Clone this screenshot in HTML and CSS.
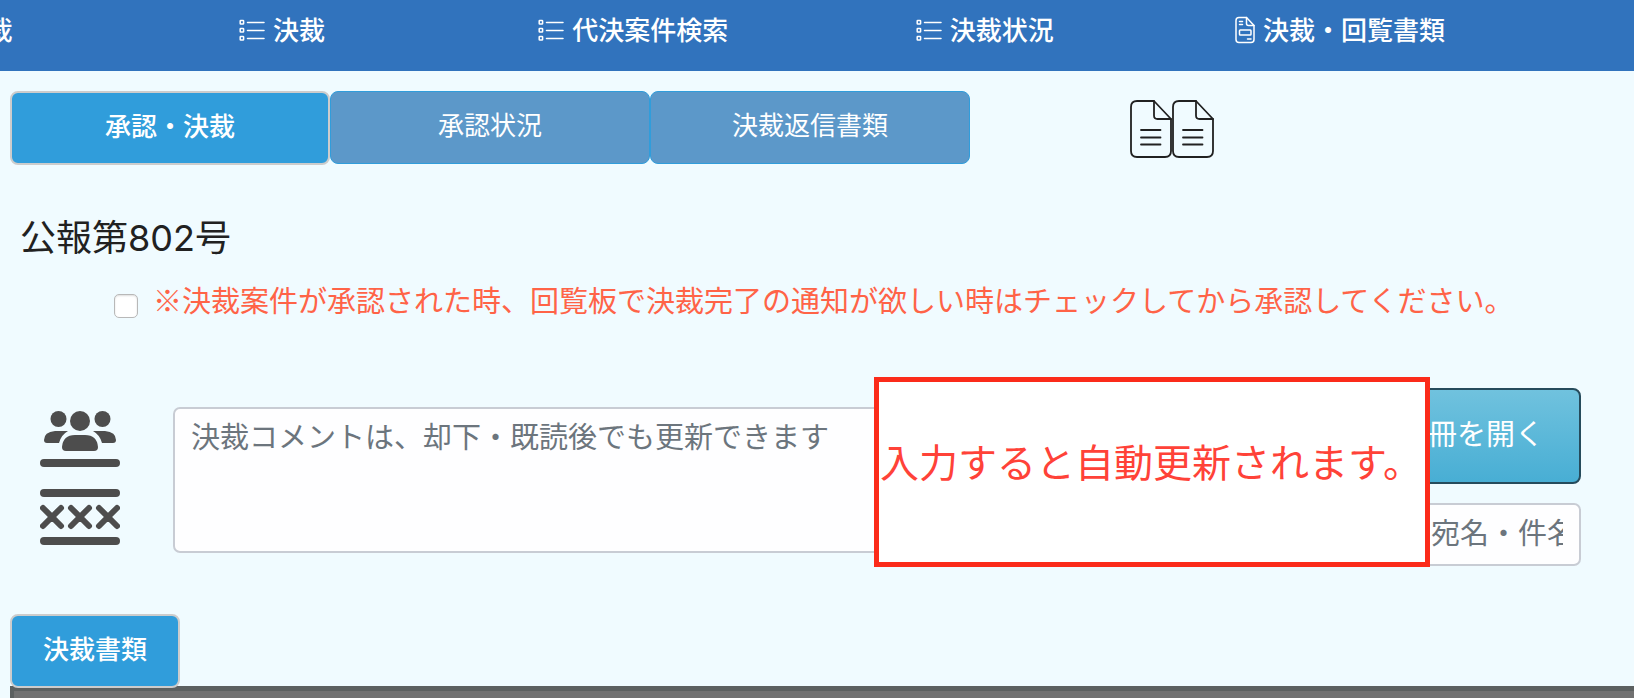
FILE: index.html
```html
<!DOCTYPE html>
<html lang="ja">
<head>
	<meta charset="utf-8">
	<meta name="viewport" content="width=device-width, initial-scale=1">
	<title>承認・決裁</title>
	<link rel="stylesheet" href="styles.css">
</head>
<body>
	<svg class="defs">
		<symbol id="icon-list" viewBox="0 0 26 24">
			<g fill="none" stroke="currentColor" stroke-width="1.5">
				<rect x="1.2" y="2.5" width="3.4" height="3.6" rx="0.6"/>
				<rect x="1.2" y="10.5" width="3.4" height="3.6" rx="0.6"/>
				<rect x="1.2" y="18.5" width="3.4" height="3.6" rx="0.6"/>
				<path d="M8.5 4.5H25M8.5 12.5H25M8.5 20.5H25" stroke-linecap="round"/>
			</g>
		</symbol>
		<symbol id="icon-doc" viewBox="0 0 42 58">
			<g fill="none" stroke="currentColor" stroke-width="1.8" stroke-linecap="round" stroke-linejoin="round">
				<path d="M24 1H7Q1 1 1 7V51Q1 57 7 57H35Q41 57 41 51V19Z"/>
				<path d="M24 1V15.5Q24 19 27.5 19H41"/>
				<path d="M11 30H30.5M11 37.5H30.5M11 44.5H30.5"/>
			</g>
		</symbol>
	</svg>

	<nav class="navbar">
		<a class="nav-item" href="#"><svg class="nav-icon"><use href="#icon-list"/></svg>承認・決裁</a>
		<a class="nav-item" href="#"><svg class="nav-icon"><use href="#icon-list"/></svg>決裁</a>
		<a class="nav-item" href="#"><svg class="nav-icon"><use href="#icon-list"/></svg>代決案件検索</a>
		<a class="nav-item" href="#"><svg class="nav-icon"><use href="#icon-list"/></svg>決裁状況</a>
		<a class="nav-item" href="#">
			<svg class="nav-icon nav-icon-file" viewBox="0 0 20 28">
				<g fill="none" stroke="currentColor" stroke-width="1.5" stroke-linecap="round" stroke-linejoin="round">
					<path d="M11.5 1.5H4Q1 1.5 1 4.5V23.5Q1 26.5 4 26.5H16Q19 26.5 19 23.5V9.5Z"/>
					<path d="M11.5 1.5V7.5Q11.5 9.5 13.5 9.5H19"/>
					<path d="M4.5 5.5H7.5M4.5 8.5H7.5M12.5 23H16"/>
					<rect x="4.5" y="14" width="11.5" height="5" rx="0.8"/>
				</g>
			</svg>決裁・回覧書類</a>
	</nav>

	<main class="content">
		<div class="tabs">
			<button class="tab active" type="button">承認・決裁</button>
			<button class="tab" type="button">承認状況</button>
			<button class="tab" type="button">決裁返信書類</button>
			<a class="docs" href="#" aria-label="書類"><svg><use href="#icon-doc"/></svg><svg><use href="#icon-doc"/></svg></a>
		</div>

		<h1 class="title">公報第802号</h1>

		<div class="notice">
			<input type="checkbox" id="notify">
			<label for="notify">※決裁案件が承認された時、回覧板で決裁完了の通知が欲しい時はチェックしてから承認してください。</label>
		</div>

		<div class="comment-row">
			<div class="stamps">
				<svg viewBox="0 0 80 56">
					<g fill="#4d4d4d">
						<circle cx="18.5" cy="8" r="8"/>
						<circle cx="62.5" cy="8" r="8"/>
						<circle cx="40" cy="10" r="10"/>
						<path d="M28 20H15Q4 21 4 29Q4 32 7 32H19Q21 24 28 20Z"/>
						<path d="M53 20H65Q76 21 76 29Q76 32 73 32H62Q60 24 53 20Z"/>
						<path d="M22 36Q23 24 35 24H45Q57 24 58 36Q58 40 54 40H26Q22 40 22 36Z"/>
						<rect x="0" y="48" width="80" height="8" rx="4"/>
					</g>
				</svg>
				<svg viewBox="0 0 80 56">
					<rect x="0" y="0" width="80" height="8" rx="4" fill="#4d4d4d"/>
					<rect x="0" y="48" width="80" height="8" rx="4" fill="#4d4d4d"/>
					<path d="M3 19L21 37M21 19L3 37M31 19L49 37M49 19L31 37M59 19L77 37M77 19L59 37" stroke="#4d4d4d" stroke-width="6" stroke-linecap="round"/>
				</svg>
			</div>
			<textarea class="comment" aria-label="決裁コメント" placeholder="決裁コメントは、却下・既読後でも更新できます"></textarea>
			<div class="side">
				<button class="open-button" type="button">冊を開く</button>
				<input class="search" type="text" aria-label="宛名・件名" placeholder="宛名・件名">
			</div>
			<div class="callout">入力すると自動更新されます。</div>
		</div>

		<button class="tab active doc-tab" type="button">決裁書類</button>
		<div class="viewer"></div>
	</main>
</body>
</html>
```
FILE: styles.css
```css
*
{
	box-sizing: border-box;
}
body
{
	margin: 0;
	min-height: 100vh;
	display: flex;
	flex-direction: column;
	overflow: hidden;
	background-color: #f0fbff;
	color: #212121;
	font-family: "Noto Sans CJK JP", "Liberation Sans", sans-serif;
}
button, input, textarea
{
	font-family: inherit;
}
.defs
{
	display: none;
}

/* navigation, scrolled so that the first entry runs off the left edge */
.navbar
{
	display: grid;
	grid-template-columns: 187fr 187fr 187fr 187fr 191fr 61fr;
	width: 115%;
	height: 71px;
	padding-top: 9px;
	margin-left: -15%;
	background-color: #3173bd;
}
.nav-item
{
	display: flex;
	justify-content: center;
	align-items: center;
	gap: 8px;
	height: 38px;
	color: white;
	font-size: 26px;
	font-weight: 500;
	white-space: nowrap;
	text-decoration: none;
}
.nav-icon
{
	width: 26px;
	height: 24px;
	margin-top: 4px;
}
.nav-icon-file
{
	width: 20px;
	height: 28px;
}

/* tabs */
.content
{
	flex: 1;
	display: flex;
	flex-direction: column;
	padding: 20px 0 0 10px;
}
.tabs
{
	display: flex;
}
.tab
{
	width: 320px;
	height: 73px;
	padding: 0 0 8px;
	border: 1px solid #309ddb;
	border-radius: 8px;
	background-color: #5c98c9;
	color: white;
	font-size: 26px;
}
.tab.active
{
	height: 74px;
	border: 2px solid #cccccc;
	background-color: #309ddb;
	font-weight: 500;
}
.docs
{
	display: flex;
	margin: 9px 0 0 160px;
	color: #212121;
}
.docs svg
{
	width: 42px;
	height: 58px;
}
.title
{
	margin: 47px 0 0 10px;
	font-family: Inter, "Noto Sans CJK JP", sans-serif;
	font-size: 36px;
	font-weight: 400;
	line-height: 52px;
}
.notice
{
	display: flex;
	align-items: center;
	gap: 15px;
	margin: 13px 0 0 104px;
	color: #ff6347;
	font-size: 29px;
	line-height: 44px;
	white-space: nowrap;
}
.notice input
{
	appearance: none;
	width: 24px;
	height: 24px;
	margin: 14px 0 0;
	border: 1px solid #b8b8b8;
	border-radius: 5px;
	background-color: white;
	box-shadow: inset 0 1px 2px #dddddd;
}

/* comment area */
.comment-row
{
	position: relative;
	display: flex;
	align-items: flex-start;
	margin: 67px 53px 0 30px;
}
.stamps
{
	display: flex;
	flex-direction: column;
	gap: 22px;
	margin: 23px 53px 0 0;
}
.stamps svg
{
	width: 80px;
	height: 56px;
}
.comment, .search
{
	border: 2px solid #c8ccd4;
	border-radius: 7px;
	background-color: #fefeff;
	font-size: 29px;
}
.comment::placeholder, .search::placeholder
{
	color: #6c757d;
	opacity: 1;
}
.comment
{
	flex: 1;
	min-width: 0;
	height: 146px;
	margin: 19px 20px 0 0;
	padding: 4px 16px;
	line-height: 44px;
	resize: none;
}
.side
{
	display: flex;
	flex-direction: column;
	gap: 19px;
	width: 190px;
}
.open-button
{
	height: 96px;
	padding: 0 0 8px;
	border: 2px solid #264b5c;
	border-radius: 8px;
	background: linear-gradient(#70c2de, #48aed4);
	color: white;
	font-size: 29px;
}
.search
{
	width: 100%;
	height: 63px;
	padding: 0 16px 8px 38px;
}
.callout
{
	position: absolute;
	top: -11px;
	right: 151px;
	width: 556px;
	height: 190px;
	padding: 50px 0 0 1px;
	border: 5px solid #fb2b1a;
	background-color: white;
	color: #ff4238;
	font-size: 39px;
	line-height: 56px;
	white-space: nowrap;
}

/* document viewer */
.doc-tab
{
	position: relative;
	width: 170px;
	margin-top: 48px;
}
.viewer
{
	flex: 1;
	margin-top: -2px;
	border-top: 5px solid #5c6060;
	border-left: 4px solid #5c6060;
	background-color: #717171;
}
```
